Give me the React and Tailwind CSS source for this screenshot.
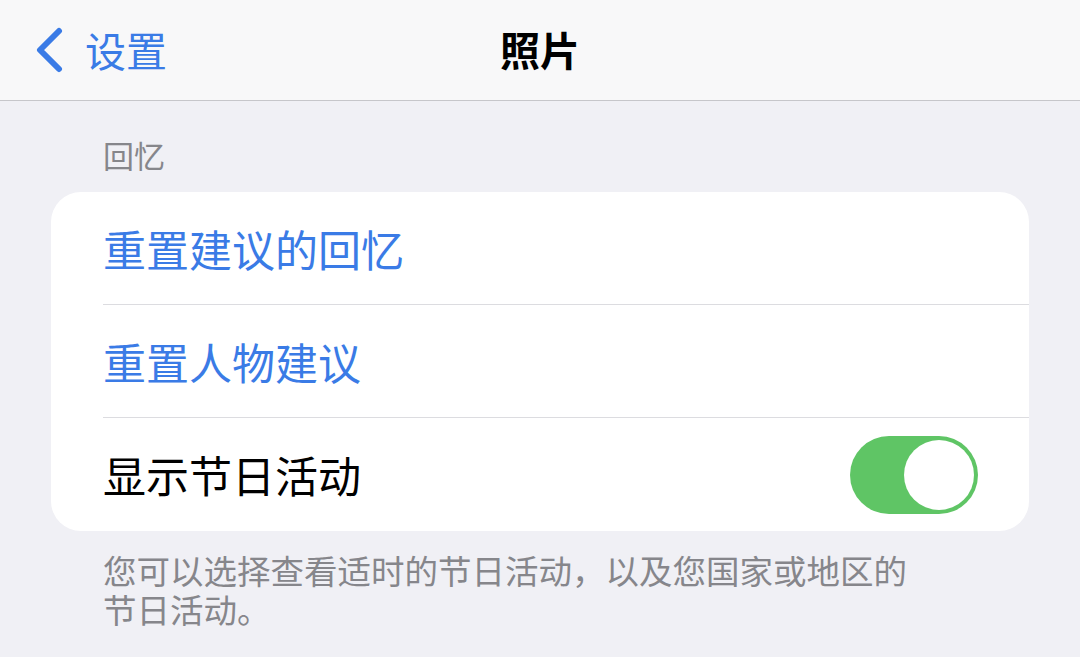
const font = { fontFamily: '"Noto Sans CJK SC", "Noto Sans", sans-serif' }

function Toggle() {
  return (
    <div className="w-[128px] h-[78px] rounded-full bg-[#5fc565] flex items-center justify-end px-[4px]">
      <div className="w-[70px] h-[70px] rounded-full bg-white" />
    </div>
  )
}

function Row({ children, last }) {
  return (
    <div className="pl-[52px] h-[113px] flex">
      <div className={'flex-1 flex items-center pr-[51px] ' + (last ? '' : 'border-b border-[#dcdce0]')}>
        {children}
      </div>
    </div>
  )
}

export default function App() {
  return (
    <div className="w-[1080px] h-[657px] bg-[#f0f0f5] overflow-hidden" style={font}>
      {/* Nav bar */}
      <div className="h-[101px] bg-[#f8f8f9] border-b border-[#c6c6ca] relative flex items-center">
        <div className="flex items-center pl-[33px] gap-[20px] text-[#3a7be6]">
          <svg width="32" height="46" viewBox="0 0 32 46" fill="none">
            <path d="M26 4 L7 23 L26 42" stroke="currentColor" strokeWidth="6" strokeLinecap="round" strokeLinejoin="round" />
          </svg>
          <span className="text-[41px] leading-none -mt-[2px]">设置</span>
        </div>
        <div className="absolute inset-x-0 top-0 h-full flex items-center justify-center pointer-events-none">
          <span className="text-[40px] font-bold leading-none text-black -mt-[2px]">照片</span>
        </div>
      </div>

      {/* Section */}
      <div className="px-[51px]">
        <div className="pl-[52px] pt-[37px] pb-[20px] text-[31px] leading-[34px] text-[#86868b]">回忆</div>
        <div className="bg-white rounded-[30px]">
          <Row>
            <span className="text-[43px] leading-none text-[#3a7be6]">重置建议的回忆</span>
          </Row>
          <Row>
            <span className="text-[43px] leading-none text-[#3a7be6]">重置人物建议</span>
          </Row>
          <Row last>
            <div className="flex-1 flex items-center justify-between">
              <span className="text-[43px] leading-none text-black">显示节日活动</span>
              <Toggle />
            </div>
          </Row>
        </div>
        <div className="pl-[52px] pt-[19px] text-[33.5px] leading-[39px] text-[#86868b]">
          <div>您可以选择查看适时的节日活动，以及您国家或地区的</div>
          <div>节日活动。</div>
        </div>
      </div>
    </div>
  )
}
